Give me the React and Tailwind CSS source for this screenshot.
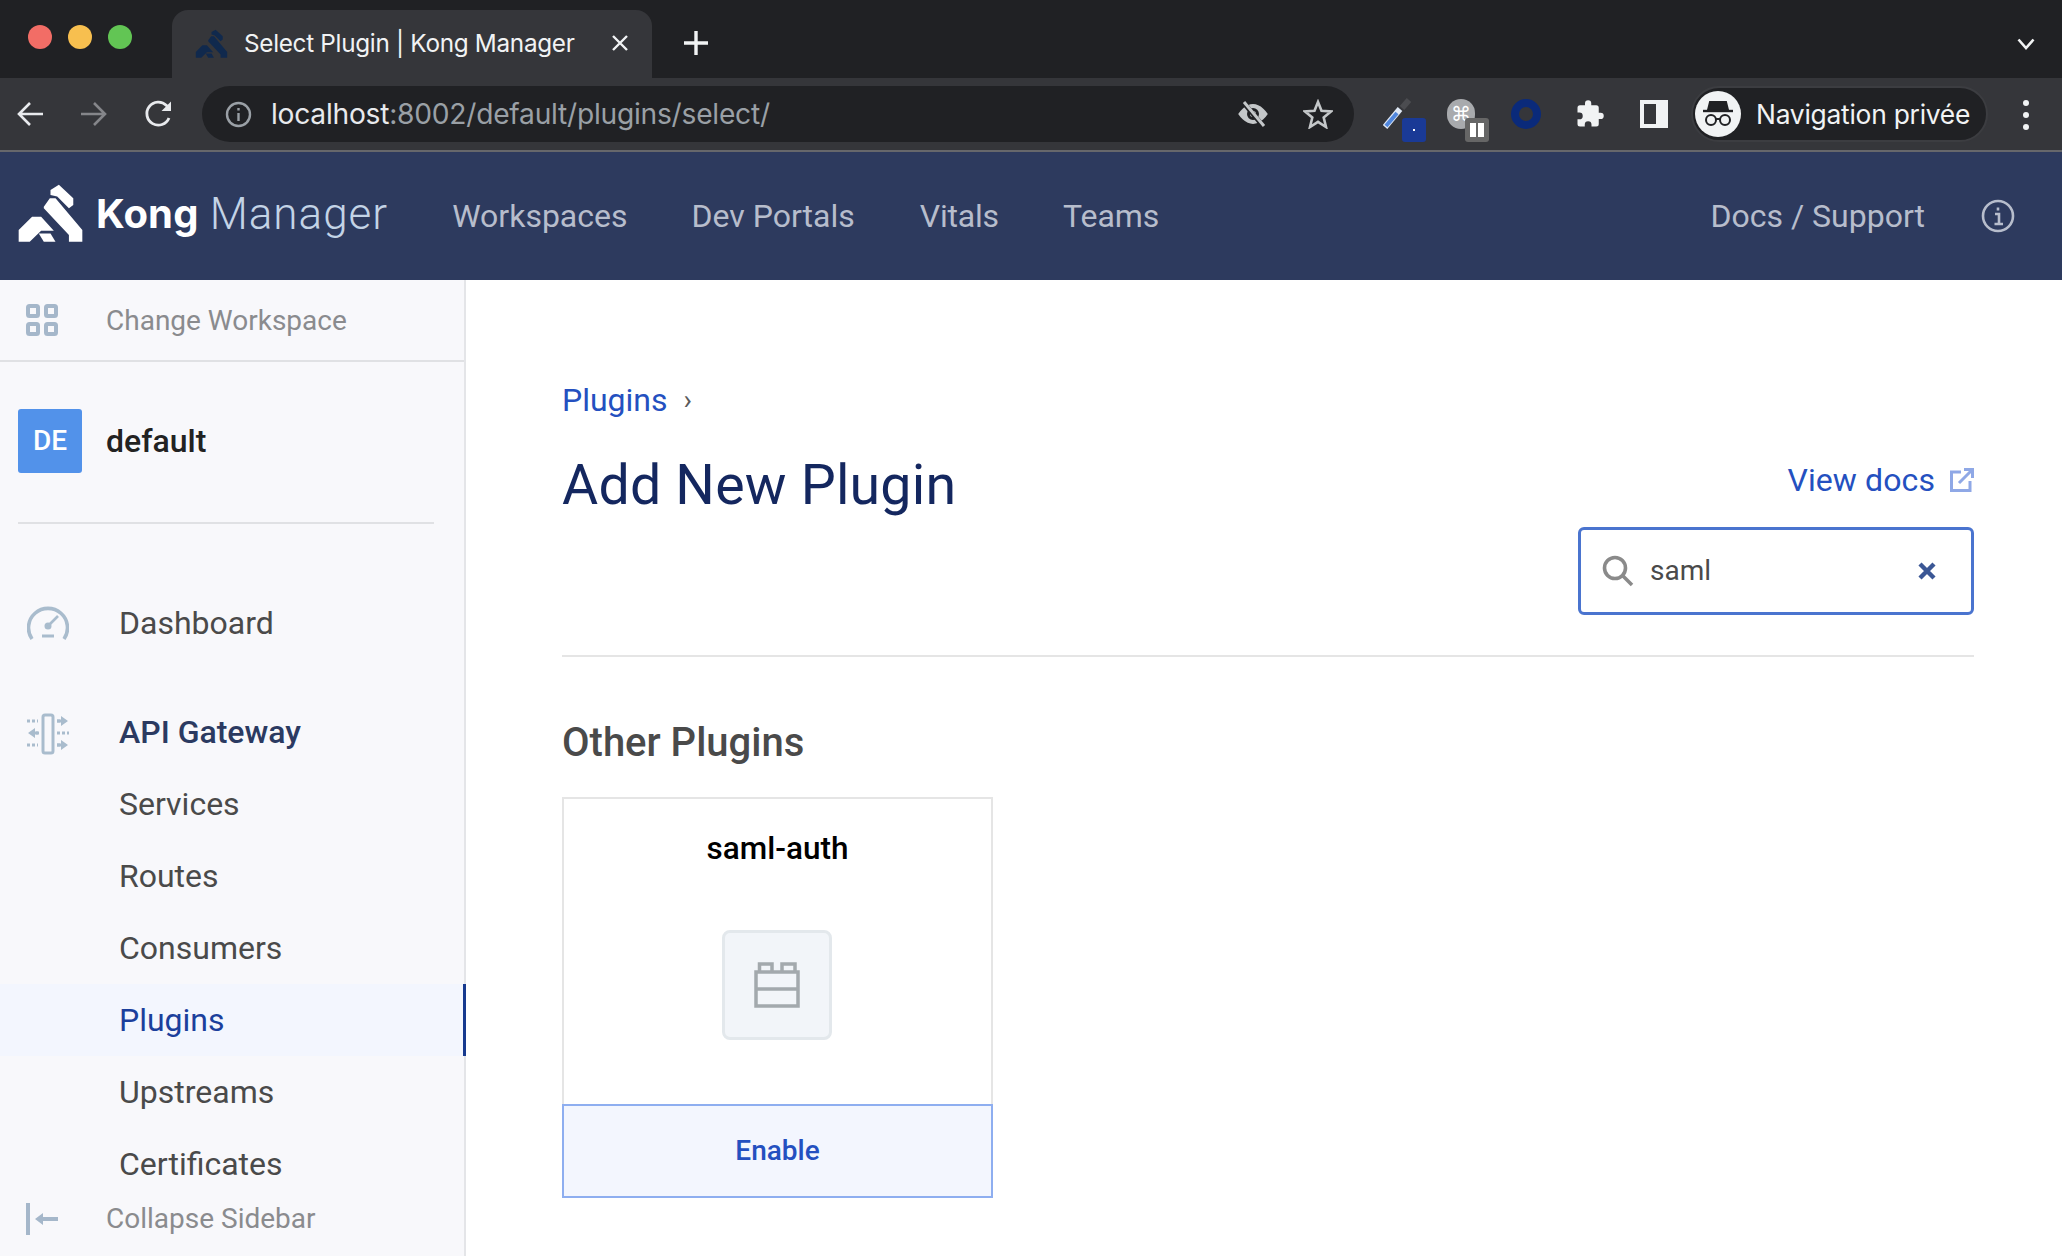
import React from "react";

const KongMark = ({ className, fill }) => (
  <svg viewBox="50 40 200 178" className={className} fill={fill}>
    <path d="M150 60 175 45 218 85V105L205 115 170 80 150 75Z" />
    <path d="M130 110 148 85H165L245 180V215H205V195L130 115Z" />
    <path d="M55 180 95 140H122L160 182H122L88 215H55Z" />
    <path d="M115 190H150L165 215H130Z" />
  </svg>
);

const NavItem = ({ children, active }) => (
  <div className={`h-[72px] pl-[119px] flex items-center text-[32px] shrink-0 ${active ? "bg-[#f3f6fe] text-[#1b3f9c] border-r-[3px] border-[#173a8f] mr-[-2px] relative" : "text-[#4a4a4a]"}`}>
    {children}
  </div>
);

export default function App() {
  return (
    <div className="w-[2062px] h-[1256px] overflow-hidden flex flex-col bg-white font-['Roboto',sans-serif]">
      {/* tab strip */}
      <div className="h-[78px] bg-[#202124] flex items-end shrink-0">
        <div className="w-[172px] h-[78px] flex items-center gap-[28px] pl-[28px] pb-[4px]">
          <span className="w-6 h-6 rounded-full bg-[#f26d66]" />
          <span className="w-6 h-6 rounded-full bg-[#f7bf4f] -ml-[12px]" />
          <span className="w-6 h-6 rounded-full bg-[#62c554] -ml-[12px]" />
        </div>
        <div className="w-[480px] h-[68px] bg-[#35363a] rounded-t-[16px] flex items-center pl-[23px] pr-[22px] pb-[2px]">
          <KongMark className="w-[33px] h-[33px]" fill="#10294d" />
          <span className="ml-[16px] text-[24.3px] text-[#f1f3f4] font-['Inter',sans-serif] tracking-[-0.3px] whitespace-nowrap">Select Plugin | Kong Manager</span>
          <svg className="ml-auto w-[20px] h-[20px]" viewBox="0 0 20 20" stroke="#f1f3f4" strokeWidth="2.4"><path d="M3 3 17 17M17 3 3 17" /></svg>
        </div>
        <svg className="ml-[30px] mb-[21px] w-[28px] h-[28px]" viewBox="0 0 28 28" stroke="#f1f3f4" strokeWidth="3.4"><path d="M14 2V26M2 14H26" /></svg>
        <svg className="ml-auto mr-[27px] mb-[27px] w-[18px] h-[14px]" viewBox="0 0 18 14" fill="none" stroke="#f1f3f4" strokeWidth="2.6"><path d="M1.500 2.500 9 11 16.500 2.500" /></svg>
      </div>

      {/* toolbar */}
      <div className="h-[74px] shrink-0 bg-[#35363a] border-b-2 border-[#66676b] flex items-start pt-[8px]">
        <div className="w-[202px] h-[56px] flex items-center pl-[16px] shrink-0">
          <svg className="w-[28px] h-[28px]" viewBox="0 0 28 28" fill="none" stroke="#e8eaed" strokeWidth="2.6"><path d="M27 14H3M14 3 3 14 14 25" /></svg>
          <svg className="ml-[36px] w-[28px] h-[28px]" viewBox="0 0 28 28" fill="none" stroke="#85868a" strokeWidth="2.6"><path d="M1 14H25M14 3 25 14 14 25" /></svg>
          <svg className="ml-[36px] w-[30px] h-[30px]" viewBox="0 0 30 30" fill="none" stroke="#e8eaed" strokeWidth="2.8"><path d="M25 19A11.500 11.500 0 1 1 22.500 6.500L26 10" /><path d="M27 2.500V12H17.500Z" fill="#e8eaed" stroke="none" /></svg>
        </div>
        <div className="w-[1152px] h-[56px] rounded-full bg-[#202124] flex items-center pl-[23px] shrink-0">
          <svg className="w-[27px] h-[27px]" viewBox="0 0 27 27" fill="none" stroke="#9aa0a6" strokeWidth="2.4"><circle cx="13.500" cy="13.500" r="11.500" /><path d="M13.500 12V20M13.500 7V9.600" /></svg>
          <span className="ml-[19px] text-[28.2px] font-['Inter',sans-serif] tracking-[-0.25px] text-[#e8eaed] whitespace-nowrap">localhost<span className="text-[#9aa0a6]">:8002/default/plugins/select/</span></span>
          <svg className="ml-auto w-[30px] h-[30px]" viewBox="0 0 30 30" fill="none" stroke="#c4c7c9" strokeWidth="3"><path d="M2 15S7.500 6.500 15 6.500 28 15 28 15 22.500 23.500 15 23.500 2 15 2 15Z" fill="#c4c7c9" /><circle cx="15" cy="15" r="4.500" stroke="#202124" /><path d="M5 3 25 27" stroke="#202124" strokeWidth="5" /><path d="M6 3 26 27" /></svg>
          <svg className="ml-[35px] mr-[21px] w-[30px] h-[30px]" viewBox="0 0 30 30" fill="none" stroke="#c4c7c9" strokeWidth="2.600"><path d="M15 3 18.500 11.800 28 12.500 20.700 18.600 23 28 15 22.900 7 28 9.300 18.600 2 12.500 11.500 11.800Z" /></svg>
        </div>
        <div className="relative w-[29px] h-[32px] ml-[29px] mt-[12px] shrink-0">
          <svg className="w-[29px] h-[32px]" viewBox="0 0 29 32" fill="none"><path d="M2 29 17 11" stroke="#dfe8f5" strokeWidth="6" /><path d="M3 28 14 15" stroke="#4f86dd" strokeWidth="4" /><path d="M19 10 26 2" stroke="#4b4c50" strokeWidth="6" /></svg>
          <span className="absolute left-[19px] top-[20px] w-[24px] h-[24px] rounded-[3px] bg-[#1a3a96] flex items-center justify-center"><span className="w-[2px] h-[2px] bg-white" /></span>
        </div>
        <div className="relative w-[28px] h-[30px] ml-[35px] mt-[13px] rounded-full bg-[#a8aaad] flex items-center justify-center text-[20px] leading-none text-white shrink-0 font-['DejaVu_Sans',sans-serif]">
          ⌘
          <span className="absolute left-[18px] top-[19px] w-[24px] h-[24px] rounded-[3px] bg-[#666666] flex items-center justify-center gap-[2px]"><span className="w-[6px] h-[14px] bg-white" /><span className="w-[6px] h-[14px] bg-white" /></span>
        </div>
        <span className="w-[30px] h-[30px] rounded-full border-[8px] border-[#0a2a7a] ml-[36px] mt-[13px] shrink-0" />
        <svg className="ml-[34px] mt-[13px] w-[30px] h-[30px] shrink-0" viewBox="0 0 24 24" fill="#f1f3f4"><path d="M20.500 11H19V7a2 2 0 0 0-2-2h-4V3.500a2.500 2.500 0 0 0-5 0V5H4a2 2 0 0 0-2 2v3.800h1.500a2.700 2.700 0 0 1 0 5.400H2V20a2 2 0 0 0 2 2h3.800v-1.500a2.700 2.700 0 0 1 5.400 0V22H17a2 2 0 0 0 2-2v-4h1.500a2.500 2.500 0 0 0 0-5z" /></svg>
        <div className="ml-[35px] mt-[14px] w-[28px] h-[28px] border-[4px] border-r-[12px] border-[#f1f3f4] shrink-0" />
        <div className="ml-[23px] w-[297px] h-[56px] rounded-full bg-[#202124] border-2 border-[#3c3d41] flex items-center pl-[2px] shrink-0">
          <div className="w-[46px] h-[46px] rounded-full bg-[#f1f3f4] flex items-center justify-center">
            <svg className="w-[36px] h-[30px]" viewBox="0 0 36 30" fill="none" stroke="#202124" strokeWidth="2"><path d="M10 3H26L28 11H8Z" fill="#202124" /><path d="M3 12H33" strokeWidth="2.400" /><circle cx="11" cy="21" r="5" /><circle cx="25" cy="21" r="5" /><path d="M16 20H20" /></svg>
          </div>
          <span className="ml-[15px] pt-[1px] text-[26.4px] text-[#f1f3f4] font-['Inter',sans-serif] tracking-[-0.25px] whitespace-nowrap">Navigation privée</span>
        </div>
        <div className="ml-[35px] mt-[14px] flex flex-col gap-[6px] shrink-0">
          <span className="w-[6px] h-[6px] rounded-full bg-[#f1f3f4]" />
          <span className="w-[6px] h-[6px] rounded-full bg-[#f1f3f4]" />
          <span className="w-[6px] h-[6px] rounded-full bg-[#f1f3f4]" />
        </div>
      </div>

      {/* app header */}
      <div className="h-[128px] shrink-0 bg-[#2d3a5e] flex items-center text-[32px] text-[#b7bdcc]">
        <KongMark className="ml-[17px] w-[67px] h-[60px] -mt-[6px]" fill="#ffffff" />
        <span className="ml-[12px] text-[40px] font-bold text-white tracking-[0.2px] -mt-[4px] font-['Inter',sans-serif]">Kong</span>
        <span className="ml-[11px] text-[44px] text-[#c3d3e6] font-light tracking-[1px] -mt-[4px]">Manager</span>
        <span className="ml-[64px]">Workspaces</span>
        <span className="ml-[64px]">Dev Portals</span>
        <span className="ml-[65px] tracking-[-0.2px]">Vitals</span>
        <span className="ml-[64px]">Teams</span>
        <span className="ml-auto">Docs / Support</span>
        <svg className="ml-[56px] mr-[47px] w-[34px] h-[34px]" viewBox="0 0 34 34" fill="none" stroke="#b7bdcc" strokeWidth="2.600"><circle cx="17" cy="17" r="15" /><path d="M14 15H18V25M13.500 25H22M17 8.500V11.500" /></svg>
      </div>

      <div className="flex-1 flex min-h-0">
        {/* sidebar */}
        <aside className="w-[466px] shrink-0 bg-[#f8f8fb] border-r-2 border-[#e4e5e8] flex flex-col">
          <div className="h-[82px] shrink-0 border-b-2 border-[#e0e1e4] flex items-center pl-[26px] text-[28px] text-[#8a8b8e]">
            <svg className="w-[32px] h-[32px]" viewBox="0 0 32 32" fill="none" stroke="#a5b7ca" strokeWidth="4"><rect x="2" y="2" width="10" height="10" rx="1.500" /><rect x="20" y="2" width="10" height="10" rx="1.500" /><rect x="2" y="20" width="10" height="10" rx="1.500" /><rect x="20" y="20" width="10" height="10" rx="1.500" /></svg>
            <span className="ml-[48px] pt-[1px]">Change Workspace</span>
          </div>
          <div className="mx-[18px] h-[162px] shrink-0 border-b-2 border-[#e0e1e4] flex items-center pb-[2px] w-[416px]">
            <div className="w-[64px] h-[64px] rounded-[3px] bg-[#5292ea] text-white text-[28px] font-medium flex items-center justify-center">DE</div>
            <span className="ml-[24px] text-[32px] font-medium text-[#222222]">default</span>
          </div>
          <div className="flex-1 min-h-0">
            <div className="h-[64px] mt-[67px] flex items-center pl-[27px] text-[32px] text-[#4a4a4a]">
              <svg className="w-[42px] h-[36px]" viewBox="0 0 42 36" fill="none" stroke="#a9bccd" strokeWidth="3.600"><path d="M5 34A19.500 19.500 0 1 1 37 34" /><circle cx="21" cy="21" r="3.500" fill="#a9bccd" stroke="none" /><path d="M21 21 31 11" strokeWidth="2.600" /><path d="M15 31H27" strokeWidth="3" /></svg>
              <span className="ml-[50px]">Dashboard</span>
            </div>
            <div className="h-[64px] mt-[45px] flex items-center pl-[27px] text-[32px] font-medium text-[#2b3a61]">
              <svg className="w-[42px] h-[42px] mt-[4px]" viewBox="0 0 42 42" fill="none" stroke="#a9bccd" strokeWidth="3"><rect x="16" y="2" width="10" height="38" rx="2" /><path d="M0 8H11M30 8H37M0 32H11M30 32H37M4 20H11M30 20H42" strokeDasharray="3 2" /><path d="M30 8H36M30 32H36M6 20H12" /><path d="M34 3 41 8 34 13ZM34 27 41 32 34 37ZM8 15 1 20 8 25Z" fill="#a9bccd" stroke="none" /></svg>
              <span className="ml-[50px]">API Gateway</span>
            </div>
            <div className="mt-[4px]">
              <NavItem>Services</NavItem>
              <NavItem>Routes</NavItem>
              <NavItem>Consumers</NavItem>
              <NavItem active>Plugins</NavItem>
              <NavItem>Upstreams</NavItem>
              <NavItem>Certificates</NavItem>
            </div>
          </div>
          <div className="h-[72px] shrink-0 flex items-center pl-[26px] pb-[2px] text-[28px] text-[#8a8b8e]">
            <svg className="w-[32px] h-[32px]" viewBox="0 0 32 32" fill="#a5b7ca"><rect x="0" y="0" width="4" height="32" /><path d="M9 16 17 10V14H32V18H17V22Z" /></svg>
            <span className="ml-[48px]">Collapse Sidebar</span>
          </div>
        </aside>

        {/* main */}
        <main className="flex-1 min-w-0 pl-[96px] pr-[88px] pt-[100px]">
          <div className="flex items-center text-[32px] text-[#2450c0] h-[40px]">
            Plugins<span className="ml-[16px] text-[28px] text-[#5a5a5a]">›</span>
          </div>
          <div className="flex items-start justify-between h-[228px] border-b-2 border-[#e5e5e5] mt-[9px]">
            <h1 className="text-[55.5px] leading-[70px] text-[#14275f] mt-[22px] tracking-[0.2px]">Add New Plugin</h1>
            <div className="flex flex-col items-end">
              <div className="flex items-center text-[32px] tracking-[0.1px] text-[#2450c0] mt-[31px] h-[40px]">
                View docs
                <svg className="ml-[15px] w-[24px] h-[24px]" viewBox="0 0 24 24" fill="none" stroke="#8fa8e6" strokeWidth="3"><path d="M11 4H1.500V22.500H20V13" /><path d="M9 15 22 2M14 1.500H22.500V10" /></svg>
              </div>
              <div className="mt-[27px] w-[396px] h-[88px] rounded-[6px] border-[3px] border-[#4a74cf] flex items-center pl-[21px] pr-[35px]">
                <svg className="w-[32px] h-[32px]" viewBox="0 0 32 32" fill="none" stroke="#8a8a8a" strokeWidth="3.600"><circle cx="13" cy="13" r="10.500" /><path d="M21 21 30 30" /></svg>
                <span className="ml-[16px] text-[28px] text-[#4a4a4a]">saml</span>
                <svg className="ml-auto w-[18px] h-[18px]" viewBox="0 0 18 18" stroke="#3b5795" strokeWidth="4.400"><path d="M2 2 16 16M16 2 2 16" /></svg>
              </div>
            </div>
          </div>
          <h2 className="mt-[60px] text-[40px] leading-[52px] font-medium text-[#4a4a4a]">Other Plugins</h2>
          <div className="mt-[28px] w-[431px] h-[401px] flex flex-col">
            <div className="h-[307px] border-2 border-b-0 border-[#e5e5e5] flex flex-col items-center">
              <div className="mt-[30px] text-[31.5px] leading-[40px] font-medium text-black">saml-auth</div>
              <div className="mt-[61px] -ml-[2px] w-[110px] h-[110px] rounded-[8px] bg-[#f2f5f9] border-[3px] border-[#e3e8ec] flex items-center justify-center">
                <svg className="w-[46px] h-[46px]" viewBox="0 0 46 46" fill="none" stroke="#a3a9ad" strokeWidth="3.500"><path d="M2 10H44V44H2ZM2 27H44M5.500 10V2H18V10M28 10V2H41V10" /></svg>
              </div>
            </div>
            <div className="flex-1 border-2 border-[#8eaef0] bg-[#f3f6fe] flex items-center justify-center text-[28px] font-medium text-[#2450c0]">Enable</div>
          </div>
        </main>
      </div>
    </div>
  );
}
